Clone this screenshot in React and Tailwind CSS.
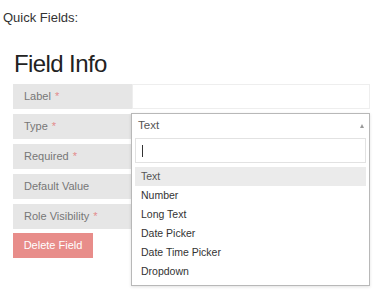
import React from "react";

const rows = [
  { label: "Label", req: true },
  { label: "Type", req: true, select: true },
  { label: "Required", req: true },
  { label: "Default Value", req: false },
  { label: "Role Visibility", req: true },
];

const options = ["Text", "Number", "Long Text", "Date Picker", "Date Time Picker", "Dropdown"];

function TypeSelect() {
  return (
    <div className="relative h-full">
      <div className="absolute left-[-1px] right-0 top-[-1px] z-10 border border-[#b8b8b8] bg-white shadow-[0_1px_3px_rgba(0,0,0,0.12)]">
        <div className="flex h-[24px] items-center justify-between pl-[6px] pr-[5px] text-[11.5px] text-[#555]">
          <span>Text</span>
          <span className="h-0 w-0 border-x-[2.5px] border-b-[4px] border-x-transparent border-b-[#999]" />
        </div>
        <div className="px-[3px] pb-[4px]">
          <div className="flex h-[25px] items-center border border-[#e2e2e2] pl-[6px]">
            <span className="h-[12px] w-px bg-[#333]" />
          </div>
        </div>
        <ul className="px-[3px] pb-[4px]">
          {options.map((o, i) => (
            <li
              key={o}
              className={`flex h-[19px] items-center pl-[6px] text-[10.5px] text-[#333] ${i === 0 ? "bg-[#ebebeb] text-[#555]" : ""}`}
            >
              {o}
            </li>
          ))}
        </ul>
      </div>
    </div>
  );
}

export default function App() {
  return (
    <div className="h-[303px] w-[392px] bg-white font-['Liberation_Sans',Arial,sans-serif]">
      <div className="pl-[3px] pt-[10px] text-[13px] leading-[16px] text-[#333]">Quick Fields:</div>
      <div className="w-[370px] pl-[13px]">
        <h1 className="mt-[24px] pl-[1px] text-[24px] leading-[28px] tracking-[-0.6px] text-[#222]">Field Info</h1>
        <div className="mt-[6px] flex flex-col gap-[5px]">
          {rows.map((r) => (
            <div key={r.label} className="grid h-[25px] grid-cols-[119px_1fr]">
              <div className="flex items-center bg-[#e6e6e6] pl-[11px] text-[11px] text-[#777]">
                {r.label}
                {r.req && <span className="ml-[4px] text-[#e38b8b]">*</span>}
              </div>
              {r.select ? (
                <TypeSelect />
              ) : (
                <div className="border border-[#eeeeee] bg-white" />
              )}
            </div>
          ))}
        </div>
        <button className="mt-[4px] h-[25px] w-[80px] bg-[#e88d8a] text-[11px] text-white">Delete Field</button>
      </div>
    </div>
  );
}
